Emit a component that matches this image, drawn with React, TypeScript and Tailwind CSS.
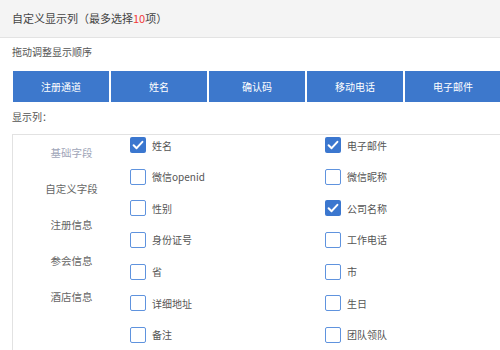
import React from "react";

const font = { fontFamily: '"Noto Sans CJK SC", "Noto Sans", sans-serif' };

const cols = ["注册通道", "姓名", "确认码", "移动电话", "电子邮件"];
const nav = ["基础字段", "自定义字段", "注册信息", "参会信息", "酒店信息"];
const items: [string, boolean][] = [
  ["姓名", true],
  ["电子邮件", true],
  ["微信openid", false],
  ["微信昵称", false],
  ["性别", false],
  ["公司名称", true],
  ["身份证号", false],
  ["工作电话", false],
  ["省", false],
  ["市", false],
  ["详细地址", false],
  ["生日", false],
  ["备注", false],
  ["团队领队", false],
];

function Box({ checked }: { checked: boolean }) {
  if (checked)
    return (
      <span className="w-4 h-4 shrink-0 rounded-[2px] bg-[#3b77cf] flex items-center justify-center">
        <svg width="16" height="16" viewBox="0 0 16 16">
          <path d="M3.6 8.2 L6.6 11.2 L12.4 4.8" fill="none" stroke="#fff" strokeWidth="2" strokeLinecap="round" strokeLinejoin="round" />
        </svg>
      </span>
    );
  return <span className="w-4 h-4 shrink-0 rounded-[2px] bg-white border-[1.5px] border-[#5f93de]" />;
}

export default function App() {
  return (
    <div className="w-[500px] h-[350px] overflow-hidden bg-white text-[#555]" style={font}>
      <div className="h-[38px] bg-[#f4f4f4] border-b border-[#e3e3e3] flex items-center pl-3 text-[11px] text-[#444]">
        自定义显示列（最多选择<span className="text-[#f23a3a]">10</span>项）
      </div>
      <div className="pl-3 mt-[7px] h-[14px] leading-[14px] text-[10px] text-[#555]">拖动调整显示顺序</div>
      <div className="ml-3 mt-[11px] flex overflow-hidden">
        {cols.map((c) => (
          <div
            key={c}
            className="w-[98px] h-[33px] shrink-0 border border-white bg-[#3d78cc] text-white text-[10px] flex items-center justify-center"
          >
            {c}
          </div>
        ))}
      </div>
      <div className="pl-3 mt-[7px] h-[14px] leading-[14px] text-[10px] text-[#555]">显示列：</div>
      <div className="ml-3 mt-[10px] border-t border-l border-[#e2e2e2] flex h-[220px]">
        <div className="w-[117px] shrink-0 flex flex-col">
          {nav.map((n, i) => (
            <div
              key={n}
              className={`h-[36px] flex items-center justify-center text-[10.5px] ${i === 0 ? "text-[#a0a5b8]" : "text-[#666]"}`}
            >
              {n}
            </div>
          ))}
        </div>
        <div className="grid grid-cols-[195px_195px] auto-rows-[31.67px] pt-[2px]">
          {items.map(([label, checked]) => (
            <div key={label} className="flex items-start">
              <div className="flex items-center h-4 gap-[6px]">
                <Box checked={checked} />
                <span className="text-[10px] text-[#555]">{label}</span>
              </div>
            </div>
          ))}
        </div>
      </div>
    </div>
  );
}
